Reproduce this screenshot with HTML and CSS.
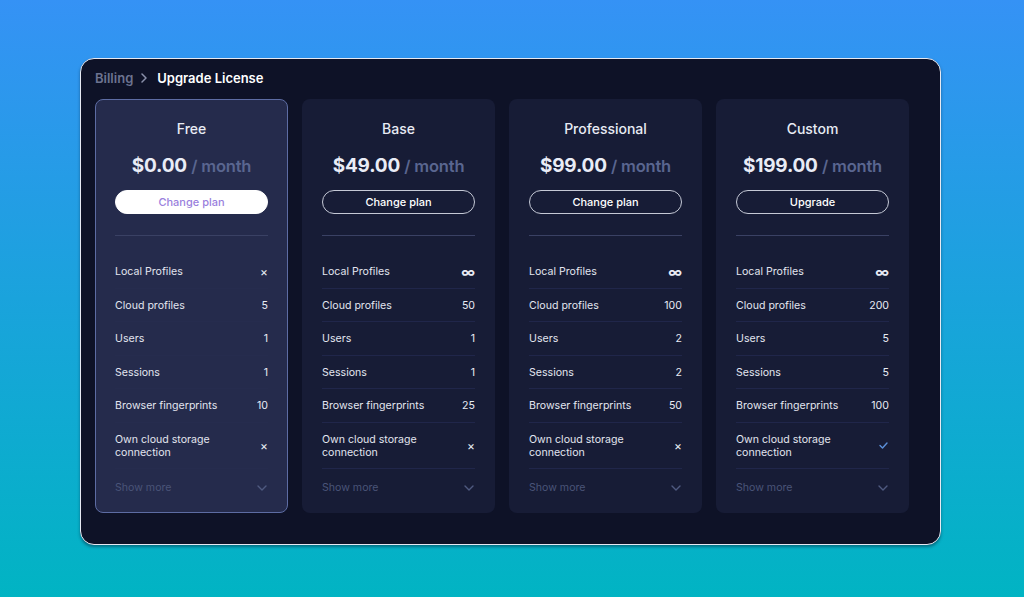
FILE: index.html
```html
<!DOCTYPE html>
<html lang="en">
<head>
  <meta charset="UTF-8" />
  <meta name="viewport" content="width=device-width, initial-scale=1.0" />
  <title>Upgrade License</title>
  <link rel="stylesheet" href="styles.css">
</head>
<body>
  <div class="frame">
    <!-- Breadcrumb -->
    <div class="crumbs">
      <span class="crumbs__prev">Billing</span>
      <svg class="crumbs__sep" width="8" height="10" viewBox="0 0 8 10"><path d="M2 1l4 4-4 4" fill="none" stroke="#8a90aa" stroke-width="1.5" stroke-linecap="round" stroke-linejoin="round"/></svg>
      <span class="crumbs__cur">Upgrade License</span>
    </div>

    <div class="plans">
      <!-- Free -->
      <div class="plan plan--current">
        <div class="plan__name">Free</div>
        <div class="plan__price">$0.00 <span class="plan__per">/ month</span></div>
        <button class="plan__btn plan__btn--light">Change plan</button>
        <div class="plan__divider"></div>
        <ul class="feats">
          <li class="feat"><span>Local Profiles</span><span class="no">×</span></li>
          <li class="feat"><span>Cloud profiles</span><span>5</span></li>
          <li class="feat"><span>Users</span><span>1</span></li>
          <li class="feat"><span>Sessions</span><span>1</span></li>
          <li class="feat"><span>Browser fingerprints</span><span>10</span></li>
          <li class="feat"><span>Own cloud storage<br>connection</span><span class="no">×</span></li>
        </ul>
        <div class="more"><span>Show more</span><svg width="10" height="6" viewBox="0 0 10 6"><path d="M1 1l4 4 4-4" fill="none" stroke="#4f5a80" stroke-width="1.4" stroke-linecap="round" stroke-linejoin="round"/></svg></div>
      </div>

      <!-- Base -->
      <div class="plan">
        <div class="plan__name">Base</div>
        <div class="plan__price">$49.00 <span class="plan__per">/ month</span></div>
        <button class="plan__btn">Change plan</button>
        <div class="plan__divider"></div>
        <ul class="feats">
          <li class="feat"><span>Local Profiles</span><span class="inf">∞</span></li>
          <li class="feat"><span>Cloud profiles</span><span>50</span></li>
          <li class="feat"><span>Users</span><span>1</span></li>
          <li class="feat"><span>Sessions</span><span>1</span></li>
          <li class="feat"><span>Browser fingerprints</span><span>25</span></li>
          <li class="feat"><span>Own cloud storage<br>connection</span><span class="no">×</span></li>
        </ul>
        <div class="more"><span>Show more</span><svg width="10" height="6" viewBox="0 0 10 6"><path d="M1 1l4 4 4-4" fill="none" stroke="#4f5a80" stroke-width="1.4" stroke-linecap="round" stroke-linejoin="round"/></svg></div>
      </div>

      <!-- Professional -->
      <div class="plan">
        <div class="plan__name">Professional</div>
        <div class="plan__price">$99.00 <span class="plan__per">/ month</span></div>
        <button class="plan__btn">Change plan</button>
        <div class="plan__divider"></div>
        <ul class="feats">
          <li class="feat"><span>Local Profiles</span><span class="inf">∞</span></li>
          <li class="feat"><span>Cloud profiles</span><span>100</span></li>
          <li class="feat"><span>Users</span><span>2</span></li>
          <li class="feat"><span>Sessions</span><span>2</span></li>
          <li class="feat"><span>Browser fingerprints</span><span>50</span></li>
          <li class="feat"><span>Own cloud storage<br>connection</span><span class="no">×</span></li>
        </ul>
        <div class="more"><span>Show more</span><svg width="10" height="6" viewBox="0 0 10 6"><path d="M1 1l4 4 4-4" fill="none" stroke="#4f5a80" stroke-width="1.4" stroke-linecap="round" stroke-linejoin="round"/></svg></div>
      </div>

      <!-- Custom -->
      <div class="plan">
        <div class="plan__name">Custom</div>
        <div class="plan__price">$199.00 <span class="plan__per">/ month</span></div>
        <button class="plan__btn">Upgrade</button>
        <div class="plan__divider"></div>
        <ul class="feats">
          <li class="feat"><span>Local Profiles</span><span class="inf">∞</span></li>
          <li class="feat"><span>Cloud profiles</span><span>200</span></li>
          <li class="feat"><span>Users</span><span>5</span></li>
          <li class="feat"><span>Sessions</span><span>5</span></li>
          <li class="feat"><span>Browser fingerprints</span><span>100</span></li>
          <li class="feat"><span>Own cloud storage<br>connection</span><svg class="yes" width="9" height="7" viewBox="0 0 9 7"><path d="M1 3.5l2.5 2.5L8 1" fill="none" stroke="#5b8fd8" stroke-width="1.4" stroke-linecap="round" stroke-linejoin="round"/></svg></li>
        </ul>
        <div class="more"><span>Show more</span><svg width="10" height="6" viewBox="0 0 10 6"><path d="M1 1l4 4 4-4" fill="none" stroke="#4f5a80" stroke-width="1.4" stroke-linecap="round" stroke-linejoin="round"/></svg></div>
      </div>
    </div>
  </div>
</body>
</html>
```

FILE: styles.css
```css
*{margin:0;padding:0;box-sizing:border-box;}
html,body{height:100%;}
body{
  font-family:Inter,"Noto Sans",Arial,sans-serif;
  background:linear-gradient(180deg,#3592f5 0%,#1aa3dc 50%,#01b4c3 100%);
  padding:58px 0 0 80px;
  overflow:hidden;
}
.frame{
  width:861px;height:487px;
  background:#0e1227;
  border:1.5px solid #e6e9f2;
  border-radius:14px;
  box-shadow:0 2px 3px rgba(0,30,50,.45);
  padding:9px 31px 31px 14px;
}
.crumbs{display:flex;align-items:center;gap:8px;height:20px;margin-bottom:11px;font-size:13px;font-weight:600;}
.crumbs__prev{color:#6c7390;}
.crumbs__sep{margin:0 1px 0 -1px;}
.crumbs__cur{color:#fff;}

.plans{display:grid;grid-template-columns:repeat(4,193px);gap:14px;}
.plan{
  height:414px;background:#171c36;border-radius:8px;
  border:1px solid transparent;
  padding:19px 19px 0;
  display:flex;flex-direction:column;
}
.plan--current{background:#252b4c;border-color:#5d6ca3;}
.plan__name{text-align:center;color:#e8ebf4;font-size:14px;line-height:20px;font-weight:500;}
.plan__price{
  text-align:center;margin-top:15px;color:#e9ecf6;
  font-size:19px;font-weight:700;line-height:24px;letter-spacing:-.2px;
}
.plan__per{color:#5a6690;font-size:16.5px;font-weight:600;}
.plan__btn{
  margin-top:12px;height:24px;border-radius:50px;
  background:transparent;border:1px solid #c5c9d6;
  color:#fff;font-family:inherit;font-size:11px;font-weight:500;cursor:pointer;
}
.plan__btn--light{background:#fff;border-color:#fff;color:#9a7fdd;}
.plan__divider{height:1px;background:#3a4164;margin-top:21px;}

.feats{list-style:none;margin-top:19px;}
.feat{
  display:flex;align-items:center;justify-content:space-between;
  padding:10px 0 9.5px;line-height:13px;
  font-size:10.6px;color:#e2e5ef;
  border-bottom:1px solid #20264a;
}
.plan--current .feat{border-bottom-color:#262c4e;}
.feat span:last-child{color:#e8ebf4;}
.feat .no{color:#8c93ae;font-size:12px;}
.feat .inf{font-size:14px;font-weight:700;color:#f0f2f8;line-height:13px;}
.yes{margin-right:1px;}
.more{
  display:flex;align-items:center;justify-content:space-between;
  padding:12px 0;font-size:10.6px;color:#4a5478;
}
.more svg{margin-right:1px;}
```
